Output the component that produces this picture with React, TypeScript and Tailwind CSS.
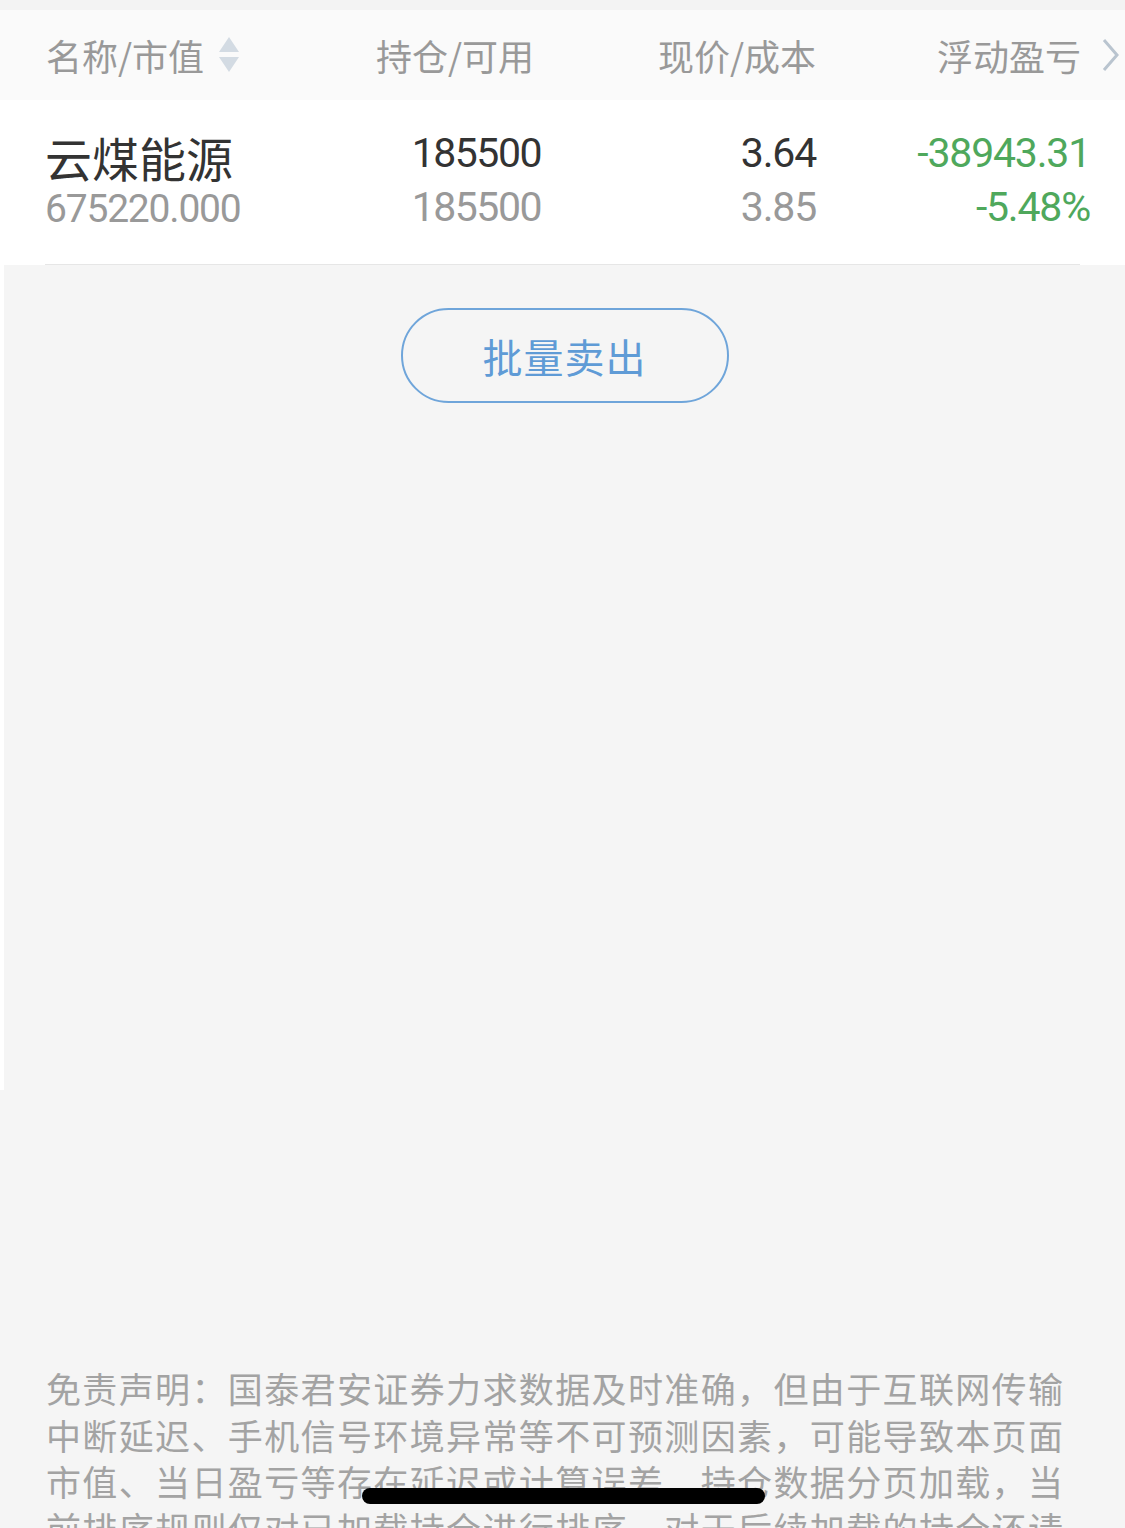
import React from 'react';

const cn = '"Noto Sans CJK SC", "Noto Sans", sans-serif';
const num = 'Roboto, "Noto Sans CJK SC", sans-serif';

const disclaimer = [
  '免责声明：国泰君安证券力求数据及时准确，但由于互联网传输',
  '中断延迟、手机信号环境异常等不可预测因素，可能导致本页面',
  '市值、当日盈亏等存在延迟或计算误差，持仓数据分页加载，当',
  '前排序规则仅对已加载持仓进行排序，对于后续加载的持仓还请',
];

const SortIcon = () => (
  <svg width="22" height="38" viewBox="0 0 22 38" className="ml-[14px]">
    <path d="M11 1 L21 16 L1 16 Z" fill="#d3dbe3" />
    <path d="M1 21 L21 21 L11 36 Z" fill="#d3dbe3" />
  </svg>
);

const Chevron = () => (
  <svg width="20" height="34" viewBox="0 0 20 34" className="ml-[20px]">
    <path d="M3 2 L16 17 L3 32" fill="none" stroke="#b9c4cf" strokeWidth="3" />
  </svg>
);

export default function App() {
  return (
    <div className="relative w-[1125px] h-[1528px] overflow-hidden bg-[#f5f5f5]" style={{ fontFamily: cn }}>
      {/* top strip */}
      <div className="h-[10px] bg-[#f3f3f3]" />

      {/* table header */}
      <div className="flex items-center h-[90px] bg-[#fafafa] pl-[46px] text-[36px] text-[#999999]">
        <div className="flex items-center w-[330px]">
          <span>名称/市值</span>
          <SortIcon />
        </div>
        <div className="w-[282px]">持仓/可用</div>
        <div className="w-[279px]">现价/成本</div>
        <div className="flex items-center">
          <span>浮动盈亏</span>
          <Chevron />
        </div>
      </div>

      {/* position row */}
      <div className="bg-white h-[165px] pl-[45px] pr-[45px]">
        <div className="flex h-[164px] pt-[26px]">
          <div className="w-[300px] shrink-0 flex flex-col">
            <span className="text-[47px] leading-[48px] mt-[7px] text-[#333333]">云煤能源</span>
            <span className="text-[39px] leading-[42px] text-[#999999] tracking-[-1.2px] mt-[7px]" style={{ fontFamily: num }}>675220.000</span>
          </div>
          <div className="w-[196px] shrink-0 flex flex-col items-end tracking-[-1.5px]" style={{ fontFamily: num }}>
            <span className="text-[41px] leading-[54px] text-[#333333]">185500</span>
            <span className="text-[41px] leading-[54px] text-[#999999]">185500</span>
          </div>
          <div className="w-[275px] shrink-0 flex flex-col items-end tracking-[-1.2px]" style={{ fontFamily: num }}>
            <span className="text-[41px] leading-[54px] text-[#333333]">3.64</span>
            <span className="text-[41px] leading-[54px] text-[#999999]">3.85</span>
          </div>
          <div className="w-[274px] shrink-0 flex flex-col items-end tracking-[-1.2px] text-[#4fa85c]" style={{ fontFamily: num }}>
            <span className="text-[41px] leading-[54px]">-38943.31</span>
            <span className="text-[41px] leading-[54px]">-5.48%</span>
          </div>
        </div>
        <div className="h-[1px] bg-[#e6e6e6]" />
      </div>

      {/* body */}
      <div className="flex">
        <div className="w-[4px] h-[825px] bg-white" />
        <div className="flex-1 flex flex-col items-center pt-[43px]">
          <button className="w-[328px] h-[95px] rounded-full border-[2.5px] border-[#6fa5da] text-[40px] text-[#5f9bd6] tracking-[1px]">
            批量卖出
          </button>
        </div>
      </div>

      {/* disclaimer */}
      <div className="pl-[46px] pr-[62px] pt-[275px] text-[35px] leading-[46.5px] text-[#a3a3a3]">
        {disclaimer.map((line) => (
          <div key={line} className="whitespace-nowrap [text-align-last:justify] text-justify">
            {line}
          </div>
        ))}
      </div>

      {/* home indicator */}
      <div className="absolute left-[362px] top-[1488px] w-[403px] h-[16px] rounded-full bg-black" />
    </div>
  );
}
